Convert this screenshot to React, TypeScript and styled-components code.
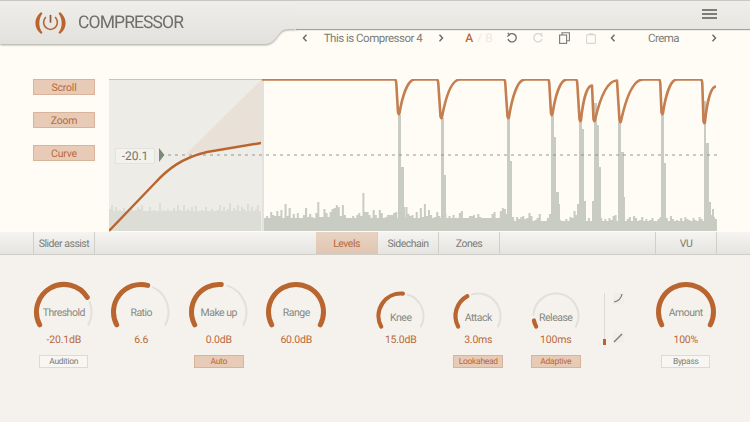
import React from "react";
import styled, { createGlobalStyle } from "styled-components";

const FONT = `"Roboto", "Noto Sans", sans-serif`;

const Global = createGlobalStyle`
  html, body { margin: 0; padding: 0; background: #f5f2ed; }
  #root { width: 750px; height: 422px; overflow: hidden; }
  * { box-sizing: border-box; }
`;

const Page = styled.div`
  width: 750px;
  height: 422px;
  display: flex;
  flex-direction: column;
  font-family: ${FONT};
  text-rendering: geometricPrecision;
  background: #f5f2ed;
  color: #7b7c76;
`;

const Top = styled.div`
  background: #fffcf5;
  height: 232px;
  display: flex;
  flex-direction: column;
`;

const Chrome = styled.div`
  display: flex;
  height: 47px;
`;

const TabShadow = styled.div`
  width: 296px;
  height: 46px;
  filter: drop-shadow(0 1px 1px rgba(90, 88, 80, 0.55));
`;

const TabShape = styled.div`
  height: 44px;
  clip-path: path("M0 0H296V29C288 29 285 29 282 31C278 34 276 40 270 43C268 44 266 44 262 44H0Z");
  background: linear-gradient(#efeeeb, #e2e1dd);
  border-top: 1px solid #c8c8c3;
  display: flex;
  align-items: center;
  padding: 0 0 0 35px;
  gap: 12px;
`;

const Title = styled.div`
  font-size: 17.5px;
  font-weight: 400;
  color: #6e6f6a;
  letter-spacing: -0.9px;
`;

const RightColumn = styled.div`
  flex: 1;
  display: flex;
  flex-direction: column;
  position: relative;
`;

const Band = styled.div`
  height: 29px;
  background: linear-gradient(#efeeeb, #e7e6e2);
  border-top: 1px solid #c8c8c3;
  box-shadow: 0 1px 1px rgba(90, 88, 80, 0.55);
  clip-path: inset(0 0 -3px 0);
  display: flex;
  align-items: center;
  justify-content: flex-end;
  padding: 0 33px 0 0;
`;

const Burger = styled.div`
  width: 15px;
  display: flex;
  flex-direction: column;
  gap: 2px;
  margin-top: -2px;
  & > i { display: block; height: 2px; background: #7d7e78; }
`;

const Toolbar = styled.div`
  height: 18px;
  display: flex;
  align-items: center;
  font-size: 11.5px;
  letter-spacing: -0.5px;
  color: #7b7c76;
`;

const Slot = styled.div<{ $w: number }>`
  width: ${(p) => p.$w}px;
  display: flex;
  align-items: center;
  justify-content: center;
  white-space: nowrap;
  height: 18px;
`;

const AB = styled.span`
  color: #b8693a;
  font-weight: 500;
  font-size: 12px;
  margin-left: 9px;
  letter-spacing: 0;
  & > em { font-style: normal; font-weight: 400; color: #eeeae3; margin-left: 4px; }
`;

const Body = styled.div`
  flex: 1;
  display: flex;
  padding: 32px 33px 0 33px;
  gap: 14px;
`;

const SideButtons = styled.div`
  width: 62px;
  display: flex;
  flex-direction: column;
  gap: 17px;
`;

const SideButton = styled.div`
  height: 16px;
  background: #e8cbb6;
  border: 1px solid #d9b49b;
  color: #b8693a;
  font-size: 10.5px;
  letter-spacing: -0.2px;
  display: flex;
  align-items: center;
  justify-content: center;
`;

const ChartBox = styled.div`
  width: 608px;
  height: 153px;
  position: relative;
`;

const ChartSvg = styled.svg`
  display: block;
`;

const ThresholdTag = styled.div`
  position: absolute;
  left: 6px;
  top: 69px;
  width: 40px;
  height: 16px;
  background: #f3f2ec;
  border: 1px solid #e4e2dc;
  border-radius: 2px;
  font-size: 12px;
  color: #75766f;
  display: flex;
  align-items: center;
  justify-content: center;
`;

const TabBar = styled.div`
  height: 23px;
  background: linear-gradient(#f5f4f1, #e5e4e0);
  border-bottom: 1px solid #cfcec9;
  display: flex;
  padding-left: 33px;
  font-size: 10.5px;
  letter-spacing: -0.5px;
`;

const Tab = styled.div<{ $active?: boolean; $w: number; $mr?: number }>`
  width: ${(p) => p.$w}px;
  margin-right: ${(p) => p.$mr ?? 0}px;
  display: flex;
  align-items: center;
  justify-content: center;
  border-right: 1px solid #d0cfca;
  color: ${(p) => (p.$active ? "#b8693a" : "#7b7c76")};
  background: ${(p) => (p.$active ? "linear-gradient(#e8d3c2, #e0c6b2)" : "transparent")};
`;

const FirstTab = styled(Tab)`
  border-left: 1px solid #d0cfca;
`;

const Controls = styled.div`
  flex: 1;
  display: flex;
  align-items: flex-start;
  padding: 26px 0 0 25px;
`;

const KnobGroup = styled.div<{ $mr: number }>`
  display: flex;
  margin-right: ${(p) => p.$mr}px;
`;

const Knob = styled.div`
  width: 77.5px;
  display: flex;
  flex-direction: column;
  align-items: center;
`;

const Dial = styled.div<{ $big: boolean }>`
  height: 50px;
  width: 100%;
  position: relative;
  display: flex;
  justify-content: center;
  align-items: ${(p) => (p.$big ? "flex-start" : "flex-end")};
`;

const DialLabel = styled.div<{ $big: boolean }>`
  position: absolute;
  left: 0;
  right: 0;
  top: ${(p) => (p.$big ? 25 : 30)}px;
  text-align: center;
  font-size: 10.5px;
  letter-spacing: -0.5px;
  line-height: 14px;
  color: #85887f;
`;

const Value = styled.div`
  margin-top: 2px;
  height: 14px;
  line-height: 14px;
  font-size: 10.5px;
  letter-spacing: -0.2px;
  color: #b8693a;
`;

const KnobButton = styled.div<{ $on?: boolean }>`
  margin-top: 8px;
  width: ${(p) => (p.$on ? 50 : 49)}px;
  height: 13px;
  font-size: 8.5px;
  letter-spacing: -0.3px;
  display: flex;
  align-items: center;
  justify-content: center;
  border: 1px solid ${(p) => (p.$on ? "#d9b49b" : "#dcdad5")};
  background: ${(p) => (p.$on ? "#e8cbb6" : "#f8f6f2")};
  color: ${(p) => (p.$on ? "#b8693a" : "#7b7c76")};
`;

const Fader = styled.div`
  width: 46.500px;
  height: 65px;
  margin-top: 5px;
  flex: none;
`;

const ORANGE = "#b9652f";

function Chevron({ left }: { left?: boolean }) {
  return (
    <svg width="6" height="8" viewBox="0 0 6 8">
      <path
        d={left ? "M4.500 .8 1.500 4l3 3.200" : "M1.500 .8 4.500 4l-3 3.200"}
        fill="none"
        stroke="#6c6d68"
        strokeWidth="1.500"
      />
    </svg>
  );
}

function Logo() {
  return (
    <svg width="31" height="22" viewBox="0 0 31 22">
      <path d="M6 0C-1.500 6-1.500 16 6 22L7.500 20.500C3 15.500 3.500 6.500 7.500 1.500Z" fill={ORANGE} />
      <path d="M25 0C32.500 6 32.500 16 25 22L23.500 20.500C28 15.500 27.500 6.500 23.500 1.500Z" fill={ORANGE} />
      <path d="M10.500 5.500C7 10 8.500 16.500 15.500 17.500C22.500 16.500 24 10 20.500 5.500" fill="none" stroke={ORANGE} strokeWidth="1.600" strokeLinecap="round" />
      <path d="M15.500 3.500v6.500" fill="none" stroke="#8a5a3c" strokeWidth="1.700" strokeLinecap="round" />
    </svg>
  );
}

function Undo({ redo, color }: { redo?: boolean; color: string }) {
  return (
    <svg width="12" height="12" viewBox="0 0 12 12" style={redo ? { transform: "scaleX(-1)" } : undefined}>
      <path d="M3 2.800A4.200 4.200 0 1 1 2 7" fill="none" stroke={color} strokeWidth="1.300" />
      <path d="M1.800 .8 3.200 3 1.200 4.600" fill="none" stroke={color} strokeWidth="1.200" />
    </svg>
  );
}

function Copy() {
  return (
    <svg width="11" height="12" viewBox="0 0 11 12">
      <rect x=".6" y="3" width="7" height="8.400" fill="none" stroke="#7b7c76" strokeWidth="1.100" />
      <path d="M3 3V.7h7.400v8H8" fill="none" stroke="#7b7c76" strokeWidth="1.100" />
    </svg>
  );
}

function Paste() {
  return (
    <svg width="10" height="11" viewBox="0 0 10 11">
      <rect x=".6" y="1.600" width="8.800" height="8.800" rx="1" fill="none" stroke="#d8d6d0" strokeWidth="1.100" />
      <rect x="3" y=".2" width="4" height="2" fill="#d8d6d0" />
    </svg>
  );
}

/* Polar point: angle measured clockwise from straight up. */
function pt(cx: number, cy: number, r: number, a: number) {
  const t = (a * Math.PI) / 180;
  return [cx + r * Math.sin(t), cy - r * Math.cos(t)];
}
function arc(cx: number, cy: number, r: number, a0: number, a1: number) {
  const [x0, y0] = pt(cx, cy, r, a0);
  const [x1, y1] = pt(cx, cy, r, a1);
  return `M${x0.toFixed(2)} ${y0.toFixed(2)}A${r} ${r} 0 ${a1 - a0 > 180 ? 1 : 0} 1 ${x1.toFixed(2)} ${y1.toFixed(2)}`;
}

const START = -118;
const END = 118;

function KnobDial({ big, to, gap }: { big: boolean; to: number; gap: number }) {
  const w = big ? 64 : 54;
  const h = big ? 50 : 40;
  const cx = w / 2;
  const cy = big ? 31 : 25;
  const r = big ? 27.5 : 22.5;
  const sw = big ? 5 : 4.2;
  const a = START + (END - START) * to;
  return (
    <svg width={w} height={h} viewBox={`0 0 ${w} ${h}`}>
      {to < 1 && (
        <path d={arc(cx, cy, r, a + gap, END)} fill="none" stroke="#e2e0da" strokeWidth={2} strokeLinecap="round" />
      )}
      <path d={arc(cx, cy, r, START, a)} fill="none" stroke={ORANGE} strokeWidth={sw} strokeLinecap="round" />
    </svg>
  );
}

/* Gain-reduction trace: a rounded trough, then a slow return towards the top. */
function recover(xb: number, yb: number, xe: number, ye: number) {
  const L = xe - xb;
  const h = yb - ye;
  return `Q${xb + 0.9} ${yb + 1.2} ${xb + 1.5} ${yb - 1.5}C${xb + 0.25 * L} ${ye + h * 0.5} ${xb + 0.55 * L} ${ye} ${xe} ${ye}`;
}
function dip(xs: number, xb: number, yb: number, xe: number, ye = 0) {
  return `L${xs - 1} 0Q${xs} 0 ${xs + 0.3} 4L${xb} ${yb - 2}${recover(xb, yb, xe, ye)}`;
}

const gainPath =
  "M153 0" +
  dip(287, 289, 35, 306) +
  dip(329, 331.500, 39, 351) +
  dip(396, 398.500, 39, 416) +
  dip(440, 442, 36, 458) +
  dip(468, 470.500, 42, 483, 6) +
  "L484.500 40" +
  recover(484.500, 42, 508, 1) +
  "L510.500 41" +
  recover(510.500, 43, 534, 0) +
  dip(551, 552.500, 35, 568) +
  dip(593, 594.500, 44, 607, 7);

// Spikes: [x, width, top] in chart coordinates, over the noise floor.
const spikes: [number, number, number][] = [
  [289, 3, 36], [292, 3, 88], [294, 2, 128],
  [332, 3, 39], [335, 2, 96],
  [398, 3, 39], [401, 2, 82],
  [442, 3, 37], [445, 2, 58], [447, 3, 113], [449, 2, 125],
  [470, 3, 43], [473, 2, 50], [475, 2, 122], [468, 2, 125],
  [485, 3, 24], [488, 2, 46], [490, 2, 88], [483, 2, 122],
  [509, 3, 43], [512, 3, 73], [514, 2, 118],
  [552, 3, 36], [555, 2, 84],
  [595, 2, 22], [597, 3, 64], [600, 2, 123], [603, 2, 130],
];

const floorData = [
  12, 14, 9, 18, 15, 14, 19, 14, 20, 8, 26, 14, 22, 9, 16, 12, 17, 9, 11, 15, 22, 13, 16, 13, 11, 17, 28, 13,
  13, 21, 17, 13, 18, 21, 22, 25, 23, 14, 25, 15, 12, 11, 8, 14, 9, 15, 17, 14, 37, 18, 18, 15, 12, 20, 15, 10,
  20, 17, 9, 13, 15, 15, 15, 17, 18, 9, 14, 18, 13, 23, 16, 14, 15, 12, 18, 11, 22, 13, 26, 14, 20, 15, 11, 13,
  18, 14, 9, 15, 16, 12, 14, 8, 15, 12, 11, 17, 19, 8, 11, 8, 14, 14, 15, 11, 16, 13, 11, 8, 9, 9, 11, 16, 18,
  11, 9, 19, 22, 21, 16, 10, 12, 13, 8, 13, 11, 13, 14, 11, 12, 17, 14, 8, 10, 12, 16, 9, 7, 7, 12, 16, 7, 14,
  12, 9, 10, 8, 8, 11, 9, 13, 12, 19, 15, 12, 10, 10, 9, 8, 12, 8, 11, 12, 9, 10, 12, 8, 11, 9, 12, 10, 14,
  15, 8, 11, 9, 10, 8, 11, 13, 9, 14, 12, 8, 10, 13, 9, 11, 7, 10, 12, 9, 8, 11, 13, 10, 9, 12, 9, 14, 11, 9,
  10, 8, 12, 9, 13, 11, 10, 8, 12, 10, 9, 13, 11, 9, 10, 12, 9, 15, 13, 11, 13, 10, 12, 18, 14, 12, 16, 10, 8, 6,
];

const BOTTOM = 152;

function floorPath(from: number, step: number, data: number[]) {
  let d = `M${from} ${BOTTOM}`;
  data.forEach((h, i) => {
    d += `V${BOTTOM - h}H${Math.min(608, from + (i + 1) * step).toFixed(1)}`;
  });
  return d + `V${BOTTOM}Z`;
}

const leftFloor = [
  20, 24, 17, 22, 15, 19, 16, 21, 18, 16, 18, 20, 16, 19, 22, 20, 24, 15, 18, 16, 22, 14, 19, 17, 16, 26, 15, 19,
  17, 20, 15, 18, 21, 16, 24, 19, 17, 24, 18, 20, 15, 22, 17, 23, 15, 16, 19, 18, 22, 16, 18, 20, 15, 17, 19, 24,
  17, 22, 18, 20, 26, 17, 21, 19, 24, 16, 22, 20, 17, 25, 17, 22, 18, 20, 24, 16,
];

function Chart() {
  return (
    <ChartSvg width="608" height="153" viewBox="0 0 608 153">
      <rect x="0" y="0" width="153" height={BOTTOM} fill="#eeece7" />
      <path d="M76 76 153 0V64C120 68 100 71 76 76Z" fill="#e9e0d8" />
      <path d={floorPath(0, 2, leftFloor.map((v) => Math.max(v, 18) + 2))} fill="#dcddd5" />
      <rect x="153" width="2" height={BOTTOM} fill="#e4e2dc" />
      <rect x="0" width="153" height="1" fill="#dcbda8" />
      <path d={floorPath(155, 2.05, floorData.map((v, i) => Math.max(v, i < 120 ? 12 : 9) + 1))} fill="#c9ccc2" />
      {spikes.map(([x, w, top], i) => (
        <rect key={i} x={x} y={top} width={w} height={BOTTOM - top} fill="#c9ccc2" />
      ))}
      <path d="M59 76H608" stroke="#85887f" strokeWidth="1" strokeDasharray="3 4" opacity=".85" />
      <path d="M50 69 55.500 76 50 83Z" fill="#7d8a78" />
      <path
        d="M0 152 46 104C58 91 72 79 98 73L152 64"
        fill="none"
        stroke="#b9652f"
        strokeWidth="2.400"
      />
      <path d={gainPath} fill="none" stroke="#c47e50" strokeWidth="2.600" strokeLinejoin="round" transform="translate(0 .5)" />
    </ChartSvg>
  );
}

type K = { name: string; value: string; to: number; big: boolean; gap?: number; btn?: string; on?: boolean };

const groupA: K[] = [
  { name: "Threshold", value: "-20.1dB", to: 0.745, big: true, gap: 11, btn: "Audition" },
  { name: "Ratio", value: "6.6", to: 0.56, big: true, gap: 12 },
  { name: "Make up", value: "0.0dB", to: 0.52, big: true, gap: 12, btn: "Auto", on: true },
  { name: "Range", value: "60.0dB", to: 1, big: true },
];
const groupB: K[] = [
  { name: "Knee", value: "15.0dB", to: 0.52, big: false, gap: 12 },
  { name: "Attack", value: "3.0ms", to: 0.38, big: false, gap: 12, btn: "Lookahead", on: true },
  { name: "Release", value: "100ms", to: 0.07, big: false, gap: 14, btn: "Adaptive", on: true },
];
const groupC: K[] = [{ name: "Amount", value: "100%", to: 1, big: true, btn: "Bypass" }];

function KnobUnit({ k }: { k: K }) {
  return (
    <Knob>
      <Dial $big={k.big}>
        <KnobDial big={k.big} to={k.to} gap={k.gap ?? 0} />
        <DialLabel $big={k.big}>{k.name}</DialLabel>
      </Dial>
      <Value>{k.value}</Value>
      {k.btn && <KnobButton $on={k.on}>{k.btn}</KnobButton>}
    </Knob>
  );
}

export default function App() {
  return (
    <Page>
      <Global />
      <Top>
        <Chrome>
          <TabShadow>
            <TabShape>
              <Logo />
              <Title>COMPRESSOR</Title>
            </TabShape>
          </TabShadow>
          <RightColumn>
            <Band>
              <Burger>
                <i />
                <i />
                <i />
              </Burger>
            </Band>
            <Toolbar>
              <Slot $w={18}><Chevron left /></Slot>
              <Slot $w={118}>This is Compressor 4</Slot>
              <Slot $w={18}><Chevron /></Slot>
              <Slot $w={49}><AB>A<em>/ B</em></AB></Slot>
              <Slot $w={26}><Undo color="#6c6d68" /></Slot>
              <Slot $w={26}><Undo redo color="#d8d6d0" /></Slot>
              <Slot $w={27}><Copy /></Slot>
              <Slot $w={26}><Paste /></Slot>
              <Slot $w={18}><Chevron left /></Slot>
              <Slot $w={83}>Crema</Slot>
              <Slot $w={18}><Chevron /></Slot>
            </Toolbar>
          </RightColumn>
        </Chrome>
        <Body>
          <SideButtons>
            <SideButton>Scroll</SideButton>
            <SideButton>Zoom</SideButton>
            <SideButton>Curve</SideButton>
          </SideButtons>
          <ChartBox>
            <Chart />
            <ThresholdTag>-20.1</ThresholdTag>
          </ChartBox>
        </Body>
      </Top>
      <TabBar>
        <FirstTab $w={62} $mr={221}>Slider assist</FirstTab>
        <Tab $w={62} $active>Levels</Tab>
        <Tab $w={61}>Sidechain</Tab>
        <Tab $w={61}>Zones</Tab>
        <Tab $w={156} />
        <Tab $w={61}>VU</Tab>
      </TabBar>
      <Controls>
        <KnobGroup $mr={27}>
          {groupA.map((k) => <KnobUnit key={k.name} k={k} />)}
        </KnobGroup>
        <KnobGroup $mr={6}>
          {groupB.map((k) => <KnobUnit key={k.name} k={k} />)}
        </KnobGroup>
        <Fader>
          <svg width="36" height="65" viewBox="0 0 36 65">
            <path d="M3.500 7V54" stroke="#dcdad5" strokeWidth="1" />
            <rect x="2" y="53" width="3" height="6" fill={ORANGE} />
            <rect x="12" y="7" width="11" height="11" fill="#f0eee9" />
            <path d="M13 16C18 15 20 13 21 8" fill="none" stroke="#777870" strokeWidth="1.200" />
            <rect x="12" y="46" width="11" height="11" fill="#f0eee9" />
            <path d="M13 56 21 48" fill="none" stroke="#777870" strokeWidth="1.200" />
          </svg>
        </Fader>
        <KnobGroup $mr={0}>
          {groupC.map((k) => <KnobUnit key={k.name} k={k} />)}
        </KnobGroup>
      </Controls>
    </Page>
  );
}
